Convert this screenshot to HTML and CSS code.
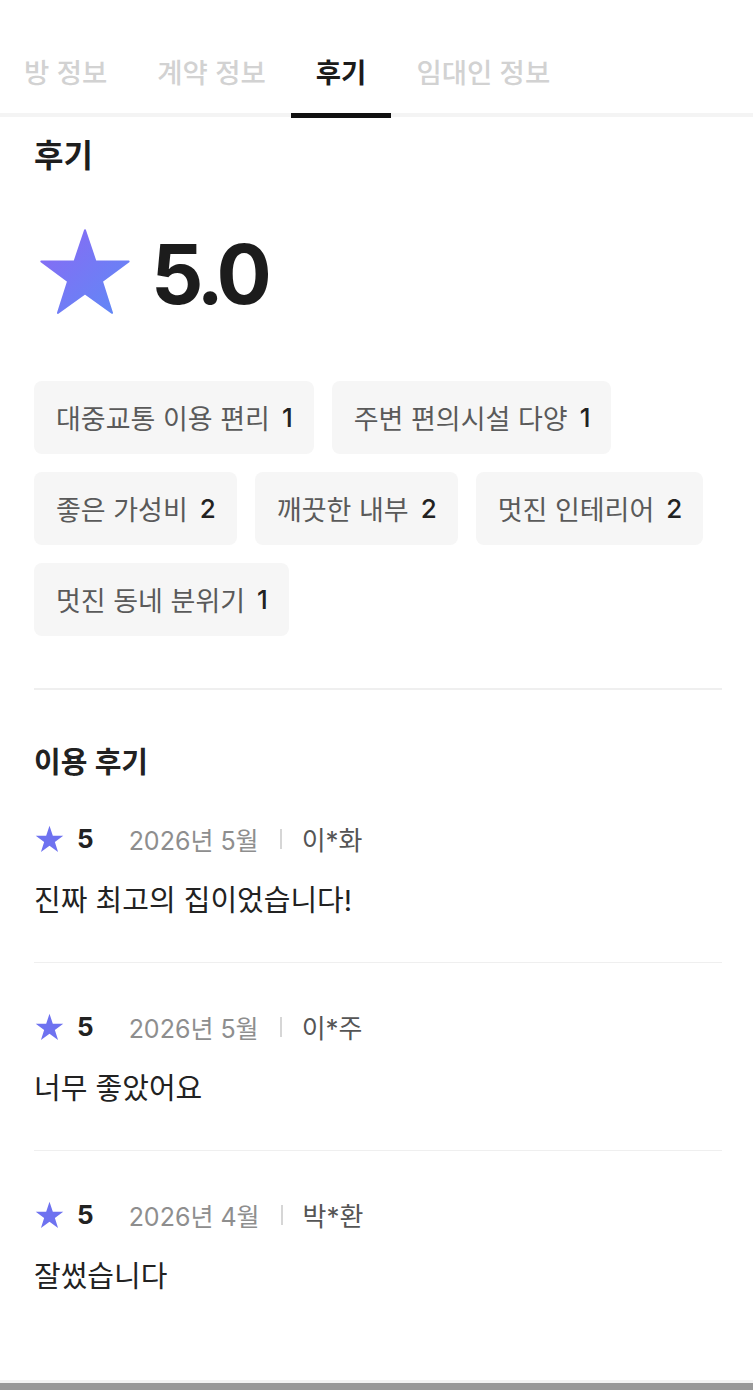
FILE: index.html
```html
<!DOCTYPE html>
<html lang="ko">
<head>
<meta charset="utf-8">
<title>후기</title>
<link rel="stylesheet" href="styles.css">
</head>
<body>
<div class="page">
  <nav class="tabs">
    <div class="tab">방 정보</div>
    <div class="tab">계약 정보</div>
    <div class="tab active">후기</div>
    <div class="tab">임대인 정보</div>
  </nav>

  <main class="content">
    <h2 class="title">후기</h2>

    <div class="score">
      <svg class="big-star" viewBox="0 0 100 95" aria-hidden="true">
        <defs>
          <linearGradient id="sg" x1="0" y1="0" x2="1" y2="1">
            <stop offset="0" stop-color="#8b68f4"/>
            <stop offset="1" stop-color="#5e8af6"/>
          </linearGradient>
        </defs>
        <polygon points="50,2 61.5,36 97.5,36 68.5,57.5 79.5,92 50,71 20.5,92 31.5,57.5 2.5,36 38.5,36" fill="url(#sg)" stroke="url(#sg)" stroke-width="2" stroke-linejoin="round"/>
      </svg>
      <span class="score-num">5.0</span>
    </div>

    <div class="tags">
      <div class="tag"><span class="tag-label">대중교통 이용 편리</span><span class="tag-count">1</span></div>
      <div class="tag"><span class="tag-label">주변 편의시설 다양</span><span class="tag-count">1</span></div>
      <div class="tag"><span class="tag-label">좋은 가성비</span><span class="tag-count">2</span></div>
      <div class="tag"><span class="tag-label">깨끗한 내부</span><span class="tag-count">2</span></div>
      <div class="tag"><span class="tag-label">멋진 인테리어</span><span class="tag-count">2</span></div>
      <div class="tag"><span class="tag-label">멋진 동네 분위기</span><span class="tag-count">1</span></div>
    </div>

    <hr class="divider">

    <h3 class="subtitle">이용 후기</h3>

    <ul class="reviews">
      <li class="review">
        <div class="meta">
          <svg class="star" viewBox="0 0 100 95" aria-hidden="true"><polygon points="50,2 61.5,36 97.5,36 68.5,57.5 79.5,92 50,71 20.5,92 31.5,57.5 2.5,36 38.5,36"/></svg>
          <span class="rate">5</span>
          <span class="date">2026년 5월</span>
          <span class="sep"></span>
          <span class="name">이*화</span>
        </div>
        <p class="body">진짜 최고의 집이었습니다!</p>
      </li>
      <li class="review">
        <div class="meta">
          <svg class="star" viewBox="0 0 100 95" aria-hidden="true"><polygon points="50,2 61.5,36 97.5,36 68.5,57.5 79.5,92 50,71 20.5,92 31.5,57.5 2.5,36 38.5,36"/></svg>
          <span class="rate">5</span>
          <span class="date">2026년 5월</span>
          <span class="sep"></span>
          <span class="name">이*주</span>
        </div>
        <p class="body">너무 좋았어요</p>
      </li>
      <li class="review">
        <div class="meta">
          <svg class="star" viewBox="0 0 100 95" aria-hidden="true"><polygon points="50,2 61.5,36 97.5,36 68.5,57.5 79.5,92 50,71 20.5,92 31.5,57.5 2.5,36 38.5,36"/></svg>
          <span class="rate">5</span>
          <span class="date">2026년 4월</span>
          <span class="sep"></span>
          <span class="name">박*환</span>
        </div>
        <p class="body">잘썼습니다</p>
      </li>
    </ul>
  </main>

  <div class="bottom-bar"></div>
</div>
</body>
</html>
```

FILE: styles.css
```css
* { box-sizing: border-box; }

html, body {
  margin: 0;
  padding: 0;
  background: #ffffff;
}

body {
  font-family: Inter, "Noto Sans CJK KR", sans-serif;
  color: #222222;
}

.page {
  display: flex;
  flex-direction: column;
  height: 1390px;
  overflow: hidden;
}

/* Tabs */
.tabs {
  display: flex;
  border-bottom: 4px solid #f4f4f4;
  margin-left: -1px;
}

.tab {
  position: relative;
  padding: 34px 25px 0;
  line-height: 79px;
  font-size: 27.5px;
  font-weight: 500;
  color: #d2d2d2;
}

.tab.active {
  color: #1b1b1b;
  font-weight: 700;
}

.tab.active::after {
  content: "";
  position: absolute;
  left: 0;
  right: 0;
  bottom: -5px;
  height: 5px;
  background: #111111;
}

/* Content */
.content {
  padding: 0 31px 0 34px;
  flex: 1;
}

.title {
  margin: 18px 0 0;
  font-size: 32px;
  line-height: 42px;
  font-weight: 700;
  color: #1e1e1e;
}

.score {
  display: flex;
  align-items: center;
  margin-top: 50px;
  height: 90px;
}

.big-star {
  width: 92px;
  height: 88px;
  margin-left: 5px;
}

.score-num {
  margin-left: 20px;
  font-size: 82px;
  font-weight: 700;
  letter-spacing: -5px;
  line-height: 1;
  color: #1c1c1c;
  padding-top: 6px;
}

/* Tags */
.tags {
  display: flex;
  flex-wrap: wrap;
  gap: 18px;
  margin-top: 64px;
}

.tag {
  display: flex;
  align-items: center;
  gap: 12px;
  height: 73px;
  padding: 0 21px 0 22px;
  background: #f6f6f6;
  border-radius: 8px;
  font-size: 27px;
}

.tag-label {
  color: #5a5a5a;
}

.tag-count {
  color: #222222;
  font-weight: 500;
  font-size: 26px;
}

.divider {
  margin: 52px 0 0;
  border: 0;
  height: 1.5px;
  background: #efefef;
}

.subtitle {
  margin: 55px 0 0;
  font-size: 29px;
  line-height: 36px;
  font-weight: 600;
  color: #222222;
}

/* Reviews */
.reviews {
  list-style: none;
  margin: 40px 0 0;
  padding: 0;
}

.review {
  padding-bottom: 41px;
  border-bottom: 1.5px solid #efefef;
}

.review + .review {
  padding-top: 46px;
}

.review:last-child {
  border-bottom: 0;
}

.meta {
  display: flex;
  align-items: center;
  height: 36px;
}

.star {
  width: 29px;
  height: 28px;
  fill: #6e72f0;
  margin-left: 1px;
}

.rate {
  margin-left: 13px;
  font-size: 26px;
  font-weight: 700;
  color: #222222;
}

.date {
  margin-left: 35px;
  font-size: 25px;
  color: #8e8e8e;
}

.sep {
  width: 2px;
  height: 20px;
  background: #d6d6d6;
  margin: 0 20px 0 21px;
}

.name {
  font-size: 26px;
  color: #555555;
}

.body {
  margin: 24px 0 0;
  font-size: 29px;
  line-height: 40px;
  color: #222222;
}

.bottom-bar {
  height: 10px;
  border-top: 3px solid #f4f4f4;
  background: #999999;
}
```
